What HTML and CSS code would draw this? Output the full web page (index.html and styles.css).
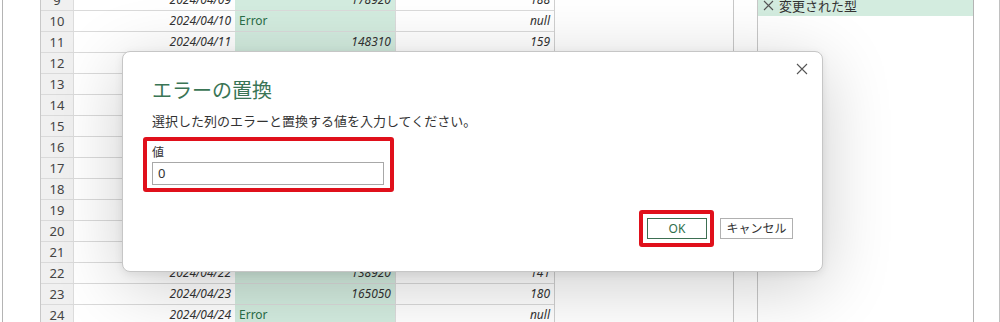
FILE: index.html
```html
<!DOCTYPE html>
<html lang="ja">
<head>
<meta charset="utf-8">
<title>エラーの置換</title>
<link rel="stylesheet" href="styles.css">
</head>
<body>
<div class="app">
  <div class="left-edge"></div>
  <div class="grid">
    <div class="row"><div class="c num">9</div><div class="c date">2024/04/09</div><div class="c green it">178920</div><div class="c val">188</div></div>
    <div class="row"><div class="c num">10</div><div class="c date">2024/04/10</div><div class="c green err">Error</div><div class="c val">null</div></div>
    <div class="row"><div class="c num">11</div><div class="c date">2024/04/11</div><div class="c green it">148310</div><div class="c val">159</div></div>
    <div class="row"><div class="c num">12</div><div class="c date">2024/04/12</div><div class="c green it">150220</div><div class="c val">162</div></div>
    <div class="row"><div class="c num">13</div><div class="c date">2024/04/13</div><div class="c green it">142560</div><div class="c val">154</div></div>
    <div class="row"><div class="c num">14</div><div class="c date">2024/04/14</div><div class="c green it">139870</div><div class="c val">150</div></div>
    <div class="row"><div class="c num">15</div><div class="c date">2024/04/15</div><div class="c green it">151030</div><div class="c val">163</div></div>
    <div class="row"><div class="c num">16</div><div class="c date">2024/04/16</div><div class="c green it">147780</div><div class="c val">158</div></div>
    <div class="row"><div class="c num">17</div><div class="c date">2024/04/17</div><div class="c green it">155310</div><div class="c val">168</div></div>
    <div class="row"><div class="c num">18</div><div class="c date">2024/04/18</div><div class="c green it">160240</div><div class="c val">172</div></div>
    <div class="row"><div class="c num">19</div><div class="c date">2024/04/19</div><div class="c green it">149980</div><div class="c val">161</div></div>
    <div class="row"><div class="c num">20</div><div class="c date">2024/04/20</div><div class="c green it">152670</div><div class="c val">165</div></div>
    <div class="row"><div class="c num">21</div><div class="c date">2024/04/21</div><div class="c green it">144110</div><div class="c val">155</div></div>
    <div class="row"><div class="c num">22</div><div class="c date">2024/04/22</div><div class="c green it">138920</div><div class="c val">141</div></div>
    <div class="row"><div class="c num">23</div><div class="c date">2024/04/23</div><div class="c green it">165050</div><div class="c val">180</div></div>
    <div class="row"><div class="c num">24</div><div class="c date">2024/04/24</div><div class="c green err">Error</div><div class="c val">null</div></div>
  </div>
  <div class="spacer"></div>
  <div class="gap"></div>
  <div class="steps">
    <div class="step">
      <svg class="step-x" width="11" height="11" viewBox="0 0 11 11"><path d="M1 1 L10 10 M10 1 L1 10" stroke="#555" stroke-width="1.1" fill="none"/></svg>
      <span>変更された型</span>
    </div>
  </div>
  <div class="far"></div>

  <div class="dialog">
    <button class="close" aria-label="閉じる">
      <svg width="12" height="12" viewBox="0 0 12 12"><path d="M1 1 L11 11 M11 1 L1 11" stroke="#555" stroke-width="1.1" fill="none"/></svg>
    </button>
    <h1 class="title">エラーの置換</h1>
    <p class="desc">選択した列のエラーと置換する値を入力してください。</p>
    <div class="field mark">
      <label class="label">値</label>
      <div class="input">0</div>
    </div>
    <div class="actions">
      <div class="mark ok-mark"><button class="btn ok">OK</button></div>
      <button class="btn cancel">キャンセル</button>
    </div>
  </div>
</div>
</body>
</html>
```
FILE: styles.css
```css
* { box-sizing: border-box; }
html, body { margin: 0; padding: 0; background: #fff; }
body {
  width: 1000px;
  height: 322px;
  overflow: hidden;
  font-family: "Noto Sans", "Noto Sans CJK JP", sans-serif;
  color: #333;
}
.app {
  position: relative;
  display: flex;
  height: 322px;
}
.left-edge {
  width: 40px;
  margin-left: 2px;
  border-left: 1px solid #b4b4b4;
  flex: none;
  margin-right: -2px;
}
.grid {
  flex: none;
  width: 515px;
  margin-top: -10px;
  border-left: 1px solid #c8c8c8;
  border-right: 1px solid #d0d0d0;
}
.row {
  display: flex;
  height: 21px;
  border-bottom: 1px solid #dadada;
}
.c {
  height: 20px;
  line-height: 20px;
  font-size: 12px;
  white-space: nowrap;
  overflow: hidden;
}
.num {
  width: 33px;
  background: #f0f0f0;
  text-align: center;
  color: #444;
  font-size: 13px;
  border-right: 1px solid #dcdcdc;
}
.date {
  width: 161px;
  text-align: right;
  padding-right: 4px;
  font-style: italic;
  color: #333;
}
.green {
  width: 160px;
  background: #d3ecdf;
  padding: 0 4px;
  color: #333;
}
.it { text-align: right; font-style: italic; }
.err { color: #2b6e48; text-align: left; }
.val {
  width: 159px;
  text-align: right;
  padding-right: 4px;
  font-style: italic;
  border-left: 1px solid #dcdcdc;
}
.spacer {
  flex: none;
  width: 179px;
  border-right: 1px solid #c8c8c8;
}
.gap {
  flex: none;
  width: 24px;
  border-right: 1px solid #c8c8c8;
}
.steps {
  flex: none;
  width: 216px;
  border-right: 1px solid #b4b4b4;
}
.step {
  margin-top: -6px;
  height: 22px;
  display: flex;
  align-items: center;
  gap: 5px;
  background: #d3ecdf;
  font-size: 13px;
  padding-left: 5px;
  color: #333;
  font-family: "Noto Sans CJK JP", sans-serif;
}
.step-x { flex: none; }
.far {
  flex: none;
  width: 26px;
  border-right: 1px solid #c0c0c0;
}

/* dialog overlay */
.dialog {
  position: absolute;
  left: 122px;
  top: 51px;
  width: 701px;
  height: 221px;
  background: #fff;
  border: 1px solid #c6c6c6;
  border-radius: 8px;
  box-shadow: 0 14px 70px rgba(0, 0, 0, 0.2), 0 2px 8px rgba(0, 0, 0, 0.08);
  padding: 24px 29px 0 29px;
}
.close {
  position: absolute;
  top: 7px;
  right: 10px;
  width: 20px;
  height: 20px;
  border: 0;
  background: transparent;
  padding: 4px;
  display: flex;
}
.title {
  margin: 0;
  font-size: 20px;
  line-height: 28px;
  font-weight: 400;
  color: #3a7555;
  font-family: "Noto Sans CJK JP", sans-serif;
}
.desc {
  margin: 8px 0 0;
  font-size: 13px;
  line-height: 18px;
  color: #333;
  font-family: "Noto Sans CJK JP", sans-serif;
}
.mark {
  border: 4px solid #e0101b;
  border-radius: 3px;
}
.field {
  margin: 7px 0 0 -9px;
  width: 251px;
  padding: 2px 5px 3px 5px;
}
.label {
  display: block;
  font-size: 12px;
  line-height: 17px;
  color: #333;
  font-family: "Noto Sans CJK JP", sans-serif;
}
.input {
  margin-top: 2px;
  width: 232px;
  height: 23px;
  border: 1px solid #a8a8a8;
  font-size: 13px;
  line-height: 21px;
  padding-left: 5px;
  color: #333;
}
.actions {
  display: flex;
  justify-content: flex-end;
  align-items: center;
  margin-top: 18px;
  gap: 6px;
}
.ok-mark {
  padding: 4px 3px 4px 4px;
}
.btn {
  height: 21px;
  font-size: 12px;
  font-family: "Noto Sans", "Noto Sans CJK JP", sans-serif;
  background: #fff;
  padding: 0;
  line-height: 19px;
}
.ok {
  width: 60px;
  border: 1px solid #3d6f52;
  color: #2f6e4b;
  display: block;
}
.cancel {
  width: 73px;
  border: 1px solid #b0b0b0;
  color: #333;
}
```
